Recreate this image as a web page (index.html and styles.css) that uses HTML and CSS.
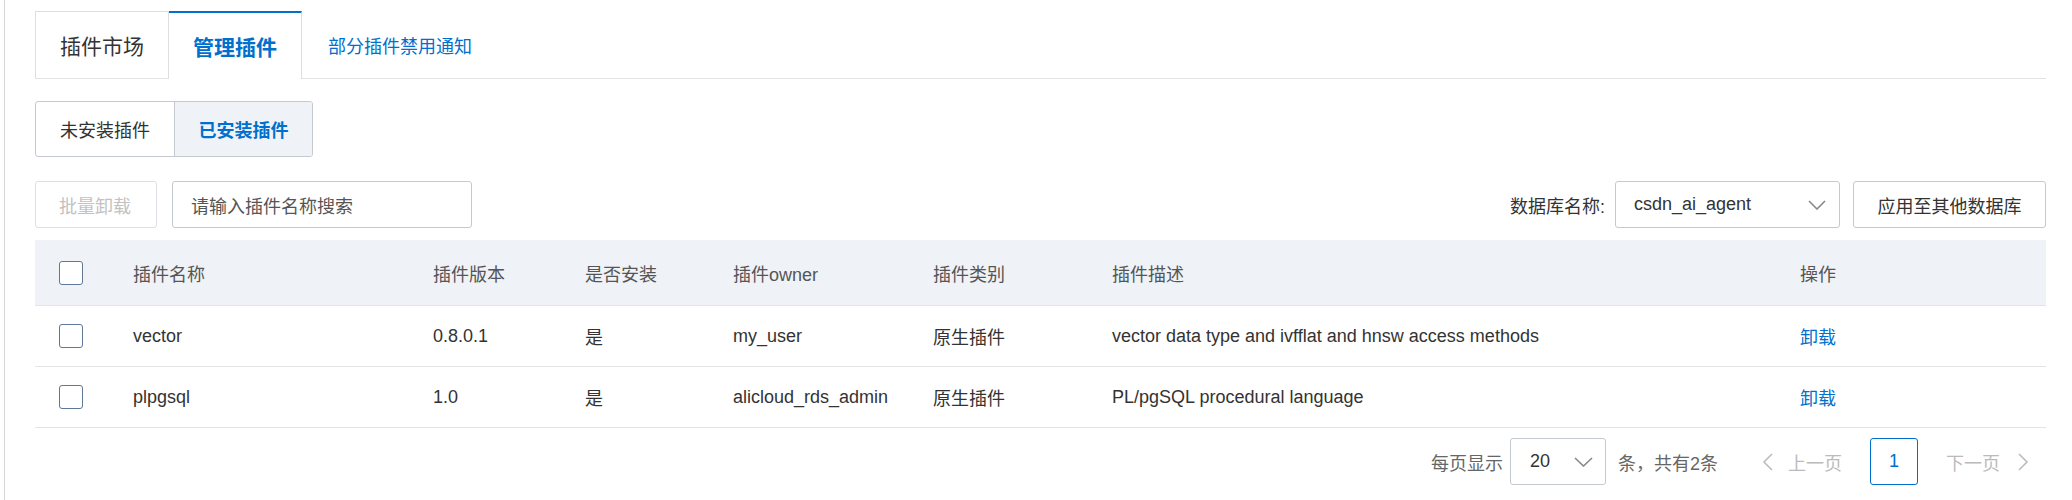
FILE: index.html
```html
<!DOCTYPE html>
<html lang="zh-CN">
<head>
<meta charset="utf-8">
<title>管理插件</title>
<link rel="stylesheet" href="styles.css">
</head>
<body>
<div class="page">
  <div class="tabs">
    <div class="tab tab-first">插件市场</div>
    <div class="tab tab-active">管理插件</div>
    <div class="tab tab-link">部分插件禁用通知</div>
  </div>

  <div class="segment">
    <div class="seg-btn">未安装插件</div>
    <div class="seg-btn seg-active">已安装插件</div>
  </div>

  <div class="toolbar">
    <div class="tool-left">
      <div class="btn btn-disabled">批量卸载</div>
      <div class="search">请输入插件名称搜索</div>
    </div>
    <div class="tool-right">
      <span class="db-label">数据库名称:</span>
      <div class="select db-select">
        <span>csdn_ai_agent</span>
        <svg class="chev" width="18" height="10" viewBox="0 0 18 10"><path d="M1 1 L9 9 L17 1" fill="none" stroke="#888" stroke-width="1.6"/></svg>
      </div>
      <div class="btn">应用至其他数据库</div>
    </div>
  </div>

  <div class="table">
    <div class="row head">
      <div class="cell"><span class="checkbox"></span></div>
      <div class="cell">插件名称</div>
      <div class="cell">插件版本</div>
      <div class="cell">是否安装</div>
      <div class="cell">插件owner</div>
      <div class="cell">插件类别</div>
      <div class="cell">插件描述</div>
      <div class="cell">操作</div>
    </div>
    <div class="row">
      <div class="cell"><span class="checkbox"></span></div>
      <div class="cell">vector</div>
      <div class="cell">0.8.0.1</div>
      <div class="cell">是</div>
      <div class="cell">my_user</div>
      <div class="cell">原生插件</div>
      <div class="cell">vector data type and ivfflat and hnsw access methods</div>
      <div class="cell link">卸载</div>
    </div>
    <div class="row">
      <div class="cell"><span class="checkbox"></span></div>
      <div class="cell">plpgsql</div>
      <div class="cell">1.0</div>
      <div class="cell">是</div>
      <div class="cell">alicloud_rds_admin</div>
      <div class="cell">原生插件</div>
      <div class="cell">PL/pgSQL procedural language</div>
      <div class="cell link">卸载</div>
    </div>
  </div>

  <div class="pager">
    <span class="pg-text">每页显示</span>
    <div class="select pg-select">
      <span>20</span>
      <svg class="chev" width="19" height="10" viewBox="0 0 19 10"><path d="M1 1 L9.5 9 L18 1" fill="none" stroke="#888" stroke-width="1.6"/></svg>
    </div>
    <span class="pg-text pg-total">条，共有2条</span>
    <span class="pg-nav pg-prev">
      <svg width="11" height="18" viewBox="0 0 11 18"><path d="M10 1 L2 9 L10 17" fill="none" stroke="#bbb" stroke-width="1.6"/></svg>
      <span>上一页</span>
    </span>
    <div class="pg-num">1</div>
    <span class="pg-nav pg-next">
      <span>下一页</span>
      <svg width="11" height="18" viewBox="0 0 11 18"><path d="M1 1 L9 9 L1 17" fill="none" stroke="#bbb" stroke-width="1.6"/></svg>
    </span>
  </div>
</div>
</body>
</html>
```
FILE: styles.css
```css
* { box-sizing: border-box; }
html, body { margin: 0; padding: 0; background: #fff; }
body {
  font-family: "Liberation Sans", "Noto Sans CJK SC", sans-serif;
  font-size: 18px;
  color: #333;
}
.page {
  margin-left: 4px;
  border-left: 1px solid #d6d6d6;
  min-height: 500px;
  padding: 11px 26px 0 30px;
}

/* tabs */
.tabs {
  display: flex;
  height: 68px;
  border-bottom: 1px solid #e3e3e3;
}
.tab {
  height: 67px;
  padding: 0 24px;
  font-size: 21px;
  display: flex;
  align-items: center;
  white-space: nowrap;
}
.tab-first {
  border: 1px solid #dedede;
  border-bottom: none;
  color: #333;
}
.tab-active {
  height: 68px;
  border-top: 2px solid #0070cc;
  border-right: 1px solid #dedede;
  background: #fff;
  color: #0070cc;
  font-weight: bold;
  padding-bottom: 1px;
}
.tab-link {
  color: #0070cc;
  padding-left: 26px;
  font-size: 18px;
}

/* segmented */
.segment {
  display: inline-flex;
  margin-top: 22px;
  border: 1px solid #c5cad1;
  border-radius: 3px;
  overflow: hidden;
}
.seg-btn {
  height: 54px;
  width: 138px;
  display: flex;
  align-items: center;
  justify-content: center;
  color: #333;
}
.seg-btn + .seg-btn { border-left: 1px solid #c5cad1; }
.seg-active {
  background: #eff3f8;
  color: #0070cc;
  font-weight: bold;
}

/* toolbar */
.toolbar {
  display: flex;
  justify-content: space-between;
  align-items: center;
  margin-top: 24px;
}
.tool-left, .tool-right {
  display: flex;
  align-items: center;
}
.btn {
  height: 47px;
  padding: 0 23px;
  border: 1px solid #c5cad1;
  border-radius: 3px;
  display: flex;
  align-items: center;
  color: #333;
  white-space: nowrap;
}
.btn-disabled {
  border-color: #dcdfe4;
  color: #c2c2c2;
  width: 122px;
}
.search {
  margin-left: 15px;
  width: 300px;
  height: 47px;
  border: 1px solid #c5cad1;
  border-radius: 3px;
  padding-left: 18px;
  display: flex;
  align-items: center;
  color: #555;
}
.db-label { color: #333; margin-right: 10px; }
.select {
  height: 47px;
  border: 1px solid #c5cad1;
  border-radius: 3px;
  display: flex;
  align-items: center;
  justify-content: space-between;
  color: #333;
}
.db-select {
  width: 225px;
  padding: 0 13px 0 18px;
  margin-right: 13px;
}
.tool-right .btn { width: 193px; justify-content: center; padding: 0; }

/* table */
.table { margin-top: 12px; }
.row {
  display: grid;
  grid-template-columns: 74px 300px 152px 148px 200px 179px 688px 1fr;
  height: 61px;
  border-bottom: 1px solid #e3e4e6;
  align-items: center;
}
.row.head {
  height: 66px;
  background: #eff2f7;
  color: #555;
}
.cell {
  padding-left: 24px;
  white-space: nowrap;
}
.link { color: #0070cc; }
.checkbox {
  display: block;
  width: 24px;
  height: 24px;
  border: 1.5px solid #5f7897;
  border-radius: 3px;
  background: #fff;
}

/* pager */
.pager {
  display: flex;
  justify-content: flex-end;
  align-items: center;
  margin-top: 10px;
  padding-right: 17px;
}
.pg-text { color: #666; white-space: nowrap; }
.pg-select {
  width: 96px;
  padding: 0 12px 0 19px;
  margin: 0 12px 0 7px;
}
.pg-total { margin-right: 44px; }
.pg-nav {
  display: flex;
  align-items: center;
  color: #bbb;
  white-space: nowrap;
}
.pg-prev svg { margin-right: 15px; }
.pg-next svg { margin-left: 18px; }
.pg-num {
  width: 48px;
  height: 47px;
  margin: 0 28px;
  border: 1px solid #0070cc;
  border-radius: 3px;
  display: flex;
  align-items: center;
  justify-content: center;
  color: #0070cc;
}
```
